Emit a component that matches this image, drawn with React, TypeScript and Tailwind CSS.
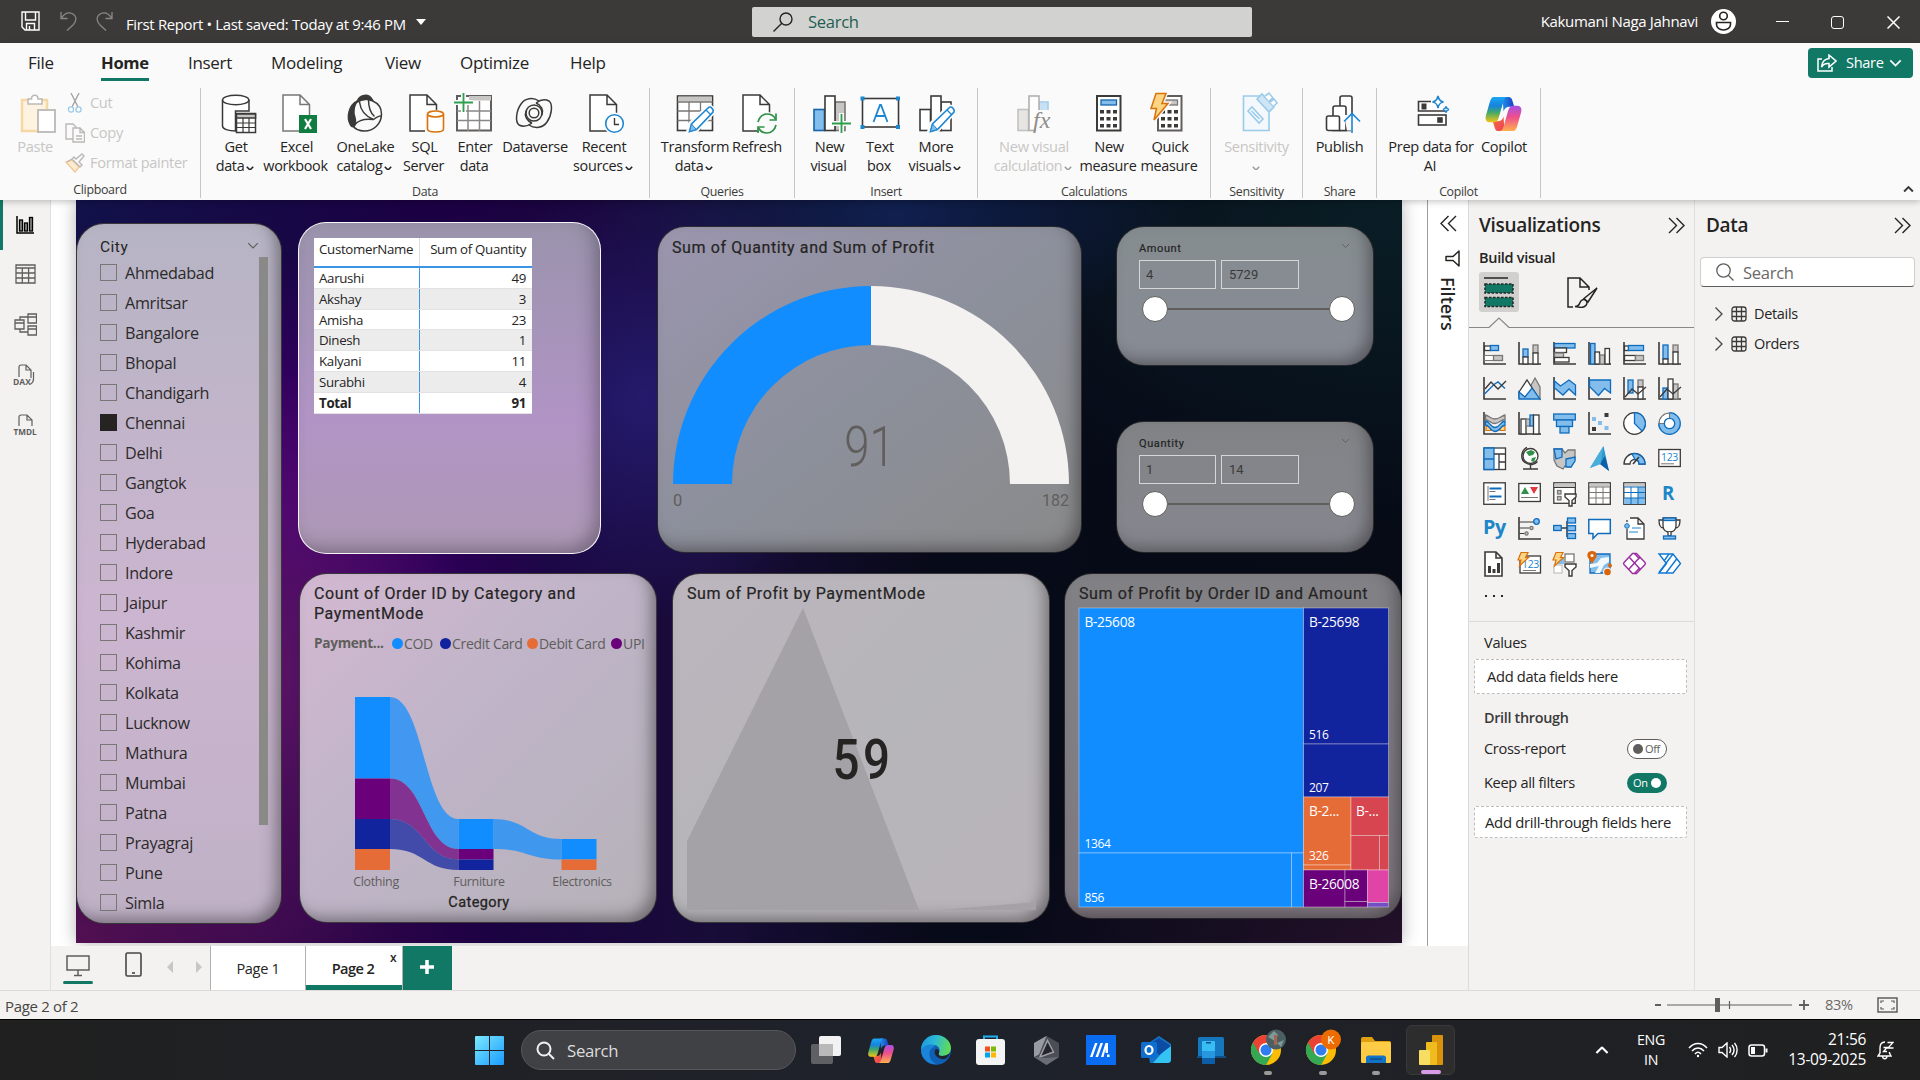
import React from "react";

const D = "#3b3a39";
const G = "#797775";
const LB = "#83bdeb";
const B = "#0f6cbd";
const GR = "#c8c6c4";

/* ---------- small shared drawings ---------- */

function Chevron({ className = "", w = 8, color = "currentColor", sw = 2 }: { className?: string; w?: number; color?: string; sw?: number }) {
  return (
    <svg className={className} width={w} height={w * 0.6} viewBox="0 0 10 6" fill="none" stroke={color} strokeWidth={sw}>
      <path d="M1 1l4 4 4-4" />
    </svg>
  );
}

function DoubleChevron({ flip = false }: { flip?: boolean }) {
  return (
    <svg width="17" height="17" viewBox="0 0 17 17" fill="none" stroke="#252423" strokeWidth="1.4" className={flip ? "rotate-180" : ""}>
      <path d="M1 1l7.5 7.5L1 16M8.500 1l7.500 7.500L8.500 16" />
    </svg>
  );
}

function Copilot({ size, id }: { size: number; id: string }) {
  return (
    <svg width={size} height={size} viewBox="0 0 40 40">
      <defs>
        <linearGradient id={id + "a"} x1="0" y1="0" x2="0" y2="1">
          <stop offset="0" stopColor="#1aa7f2" />
          <stop offset=".35" stopColor="#1583e0" />
          <stop offset=".6" stopColor="#3fa76c" />
          <stop offset="1" stopColor="#f2c514" />
        </linearGradient>
        <linearGradient id={id + "b"} x1="0" y1="0" x2="0" y2="1">
          <stop offset="0" stopColor="#a850e8" />
          <stop offset=".45" stopColor="#ee4f8b" />
          <stop offset="1" stopColor="#ffb04e" />
        </linearGradient>
        <linearGradient id={id + "c"} x1="0" y1="0" x2="1" y2="0">
          <stop offset="0" stopColor="#1f8de8" />
          <stop offset="1" stopColor="#1b3fc4" />
        </linearGradient>
        <linearGradient id={id + "d"} x1="0" y1="0" x2="1" y2="1">
          <stop offset="0" stopColor="#f0702c" />
          <stop offset="1" stopColor="#ef4060" />
        </linearGradient>
      </defs>
      <path d="M19 3h6c2.500 0 3.500 1.500 4 3.500l2 6.500h-5c-3 0-5 1.500-6 5z" fill={`url(#${id}c)`} />
      <path d="M21 38h-6c-2.500 0-3.500-1.500-4-3.500L9 28h5c3 0 5-1.500 6-5z" fill={`url(#${id}d)`} />
      <path d="M10 3h14c-2 0-3 1.500-4 4.500l-5 17c-1 3-2.500 4.500-5 4.500H6c-4 0-5-3-4-7L6 8c1-3 2-5 4-5z" fill={`url(#${id}a)`} />
      <path d="M30 38H16c2 0 3-1.500 4-4.500l5-17c1-3 2.500-4.500 5-4.500h4c4 0 5 3 4 7l-4 14c-1 3-2 5-4 5z" fill={`url(#${id}b)`} />
    </svg>
  );
}

const docPath = "M6 2h17l9.500 9.500V38H6zM23 2v9.500h9.500";

function Pencil() {
  return (
    <g>
      <path d="M13.500 39l2-8L33 14.500c2-1.500 6 1.500 5 4.500L21.500 36.500z" fill="#fff" stroke="#fafafa" strokeWidth="5" />
      <path d="M14.500 38.500l2-7.500L33.500 14.500c2-1.500 5.500 1.500 4.500 4.500L21.500 36.500z" fill="#fff" stroke="#1d86d1" strokeWidth="1.600" />
      <path d="M14.500 38.500l2-7.500 5 5.500z" fill={LB} stroke="#1d86d1" strokeWidth="1" />
      <path d="M31 17l5 5" stroke="#1d86d1" strokeWidth="1.300" />
    </g>
  );
}

function Bolt() {
  return <path d="M6 0.500h10l-4 10h6L4 27l2.500-11.500H1z" fill="#fbd584" stroke="#d9720b" strokeWidth="1.500" />;
}

function CalcKeys() {
  return (
    <g fill={D}>
      {[17, 24, 31].map((y) => [11, 17.5, 24].map((x) => <rect key={x + "-" + y} x={x} y={y} width="4" height="3.500" />))}
    </g>
  );
}

/* ---------- ribbon icons, 40 x 40 ---------- */

const ribbonIcons: Record<string, React.ReactNode> = {
  get: (
    <g stroke={D} strokeWidth="1.500" fill="#fff">
      <path d="M6.500 7v26c0 3 6 5 13 5V18h13.500V7" />
      <ellipse cx="19.700" cy="7" rx="13.200" ry="4.800" />
      <rect x="20.500" y="20.500" width="19" height="19" />
      <path d="M20.500 21h19v4h-19z" fill={GR} />
      <path d="M20.500 30h19M20.500 34.500h19M27 25v14.500M33 25v14.500" strokeWidth="1.200" />
    </g>
  ),
  excel: (
    <g>
      <path d={docPath} fill="#fff" stroke={G} strokeWidth="1.500" />
      <rect x="22" y="22" width="18" height="18" fill="#107c41" />
      <path d="M28 26l6 10M34 26l-6 10" stroke="#fff" strokeWidth="2.200" />
    </g>
  ),
  onelake: (
    <g fill="none" stroke={D} strokeWidth="1.500">
      <path d="M11.500 8C3 12 0 24 4.500 32c1.500 2.500 4 2 4.500 0 1.500-4 0-7-1-11C7.500 16 9 11 11.500 8z" fill={D} />
      <path d="M11 9c2-8 12-9 15.500-2C21 5.500 15 6.500 11 9z" fill={D} />
      <path d="M12 8.500C20 3.500 35.500 8 35.500 21c0 10-8 17-17 17C13 38 9 36 6.500 32.500" />
      <path d="M13.500 9c1 8 5 14 14 17.500M22.500 6.500c0 7 2.500 14 6 17M9 31.500c4-5 10-6 18.500-5 5-4 8-4 8-3" />
    </g>
  ),
  sql: (
    <g>
      <path d={docPath} fill="#fff" stroke={D} strokeWidth="1.500" transform="translate(-1 0)" />
      <rect x="20" y="17" width="20" height="23" fill="#fafafa" />
      <path d="M22.500 21v15c0 4 16 4 16 0V21" fill="#fff" stroke="#d9720b" strokeWidth="1.600" />
      <ellipse cx="30.500" cy="21" rx="8" ry="3" fill="#fff" stroke="#d9720b" strokeWidth="1.600" />
    </g>
  ),
  enter: (
    <g>
      <rect x="2" y="3" width="34" height="34.500" fill="#fff" stroke="#605e5c" strokeWidth="2" />
      <rect x="14" y="3" width="22" height="4.500" fill={GR} />
      <path d="M2 18h34M2 27.500h34M13 8v30M24.500 8v30" stroke="#8a8886" strokeWidth="1.500" />
      <path d="M8.500 0v19M-1 9.500h19" stroke="#fafafa" strokeWidth="5" />
      <path d="M8.500 0v19M-1 9.500h19" stroke="#2e9e4f" strokeWidth="1.800" />
    </g>
  ),
  dataverse: (
    <g fill="none" stroke={D} strokeWidth="1.500">
      <path d="M24 8C18 4 10 5 6 11c-5 7-6 18-2 21 4 2 9 1 13-2" />
      <path d="M14 32c6 4 14 3 18-3 5-7 6-18 2-21-4-2-9-1-13 2" />
      <circle cx="19" cy="20" r="8" />
      <circle cx="19" cy="20" r="4.800" />
      <path d="M21 10c5 2 8 7 6 12M17 30c-5-2-8-7-6-12" />
    </g>
  ),
  recent: (
    <g>
      <path d={docPath} fill="#fff" stroke={D} strokeWidth="1.500" />
      <circle cx="30.500" cy="30.500" r="11" fill="#fafafa" />
      <circle cx="30.500" cy="30.500" r="8.800" fill="#fff" stroke="#1d86d1" strokeWidth="1.600" />
      <path d="M30.500 25v6.500h4.500" stroke={D} strokeWidth="1.400" fill="none" />
    </g>
  ),
  transform: (
    <g>
      <rect x="2.500" y="3" width="35" height="34.500" fill="#fff" stroke={D} strokeWidth="1.600" />
      <rect x="3.300" y="3.500" width="33.500" height="5" fill={GR} />
      <path d="M2.500 9h35M2.500 18h35M2.500 27.500h35M14 9v28M25.500 9v28" stroke={G} strokeWidth="1.300" />
      <Pencil />
    </g>
  ),
  refresh: (
    <g>
      <path d={docPath} fill="#fff" stroke={D} strokeWidth="1.500" />
      <circle cx="30" cy="30.500" r="11.500" fill="#fafafa" />
      <g fill="none" stroke="#2e9247" strokeWidth="1.700">
        <path d="M21 29c1-5 5-8 9-8s7 2 8.500 5M39 32c-1 5-5 8-9 8s-7-2-8.500-5" />
        <path d="M39 20.500V27h-6.500M21 40v-6h6.500" />
      </g>
    </g>
  ),
  newvisual: (
    <g strokeWidth="1.600">
      <rect x="4" y="16.500" width="10.500" height="21" fill={LB} stroke="#1565ab" />
      <rect x="25" y="9" width="10" height="28.500" fill={GR} stroke={G} />
      <rect x="15" y="3" width="10" height="34.500" fill="#fff" stroke={D} />
      <path d="M31.500 20v21M22 30.500h19" stroke="#fafafa" strokeWidth="5" />
      <path d="M31.500 21v19M22 30.500h19" stroke="#2e9e4f" strokeWidth="1.800" />
    </g>
  ),
  textbox: (
    <g>
      <rect x="2.500" y="5.500" width="36" height="28.500" fill="#fff" stroke={D} strokeWidth="1.600" />
      <g fill="#1d86d1">
        <rect x="0.500" y="3.500" width="4" height="4" />
        <rect x="36" y="3.500" width="4" height="4" />
        <rect x="0.500" y="32" width="4" height="4" />
        <rect x="36" y="32" width="4" height="4" />
      </g>
      <path d="M13.500 29l6.500-17h1l6.500 17M15.500 23h10" fill="none" stroke="#1d86d1" strokeWidth="1.800" />
    </g>
  ),
  morevisuals: (
    <g>
      <g strokeWidth="1.600" fill="#fff" stroke={D}>
        <rect x="4" y="16.500" width="10.500" height="21" />
        <rect x="25" y="9" width="10" height="28.500" />
        <rect x="15" y="3" width="10" height="34.500" />
      </g>
      <Pencil />
    </g>
  ),
  nvc: (
    <g strokeWidth="1.600">
      <rect x="4" y="16.500" width="10.500" height="21" fill="#e6e5e4" stroke="#c4c2c0" />
      <rect x="25" y="9" width="9" height="20" fill="#c7e0f4" stroke="#a7cfec" />
      <rect x="15" y="3" width="10" height="34.500" fill="#fdfdfd" stroke="#b3b1af" />
      <rect x="22" y="17" width="18" height="23" fill="#fafafa" />
      <text x="19" y="35" fontFamily="Liberation Serif, serif" fontStyle="italic" fontSize="24" fill="#8f8d8b" letterSpacing="0">fx</text>
    </g>
  ),
  newmeasure: (
    <g>
      <rect x="8" y="3" width="23.500" height="34.500" fill="#fff" stroke={D} strokeWidth="2" />
      <rect x="12" y="7" width="15.500" height="5" fill={LB} stroke="#1565ab" strokeWidth="1.300" />
      <CalcKeys />
    </g>
  ),
  quick: (
    <g>
      <rect x="8" y="3" width="23.500" height="34.500" fill="#fff" stroke="#605e5c" strokeWidth="2" />
      <rect x="12" y="7" width="15.500" height="5" fill={GR} stroke={G} strokeWidth="1.300" />
      <CalcKeys />
      <path d="M6 0.500h10l-4 10h6L4 27l2.500-11.500H1z" fill="#fafafa" stroke="#fafafa" strokeWidth="4" />
      <Bolt />
    </g>
  ),
  sensitivity: (
    <g fill="none" stroke="#9ccbea" strokeWidth="1.600">
      <path d="M24 3H6.500v34.500H32V20" fill="#f2f8fc" />
      <path d="M11 18l4-4 11 12-4 4zM14.500 18l8 8" />
      <path d="M20 6l5-5 12 13-5 5z" fill="#cfe5f5" />
      <path d="M28 3l4-3 4 5-4 3M33 9l4-3 3 4-3 3" fill="#fff" />
    </g>
  ),
  publish: (
    <g fill="#fff" stroke={D} strokeWidth="1.600">
      <path d="M20 37.500V5a2 2 0 012-2h8a2 2 0 012 2v32.500z" />
      <path d="M13 37.500V15a2 2 0 012-2h9a2 2 0 012 2v22.500z" />
      <path d="M6.500 35.500V25a2 2 0 012-2h9a2 2 0 012 2v12.500H8.500a2 2 0 01-2-2z" />
      <path d="M24 22h16v18h-9v-2.500h-4z" fill="#fafafa" stroke="none" />
      <path d="M32 40V21M24 28.500l8-8 8 8" stroke="#1d86d1" fill="none" />
    </g>
  ),
  prep: (
    <g fill="#fff" stroke={D} strokeWidth="1.600">
      <path d="M20 8.500H7.500V18h27.500v-3" />
      <rect x="7.500" y="22" width="27.500" height="10" />
      <rect x="11" y="11" width="4" height="5" fill={D} strokeWidth="1" />
      <rect x="27" y="25" width="4" height="4" fill={D} />
      <path d="M27 3c.8 4 2 5.500 5.500 6-3.500.7-4.700 2-5.500 6-.8-4-2-5.300-5.500-6 3.500-.5 4.700-2 5.500-6z" stroke="#1d86d1" />
      <path d="M35 13.500c.5 2 1.200 2.700 3 3-1.800.4-2.500 1-3 3-.5-2-1.200-2.600-3-3 1.800-.3 2.500-1 3-3z" stroke="#1d86d1" />
    </g>
  ),
};

type Btn = { icon: string; l1: string; l2?: string; drop?: boolean; off?: boolean; w: string };

function RibbonButton({ icon, l1, l2, drop, off, w }: Btn) {
  return (
    <div className={`flex shrink-0 flex-col items-center ${w} ${off ? "text-[#c8c6c4]" : "text-[#252423]"}`}>
      <div className="h-10 w-10">
        {icon === "copilot" ? (
          <div className="pt-px">
            <Copilot size={39} id="rb" />
          </div>
        ) : (
          <svg width="40" height="40" viewBox="0 0 40 40" className="overflow-visible">
            {ribbonIcons[icon]}
          </svg>
        )}
      </div>
      <div className="mt-[3px] whitespace-nowrap text-[14.6px] leading-5">{l1}</div>
      <div className="flex h-5 items-center gap-[2px] whitespace-nowrap pr-[2px] text-[14.4px] leading-5">
        {l2 && <span>{l2}</span>}
        {drop && <Chevron className={off ? "mt-1 text-[#a19f9d]" : "mt-1"} w={8} />}
      </div>
    </div>
  );
}

function RibbonGroup({ label, w, pl, items }: { label: string; w: string; pl: string; items: Btn[] }) {
  return (
    <div className={`flex h-[110px] shrink-0 flex-col border-r border-[#c8c6c4] ${w}`}>
      <div className={`flex pt-[5px] ${pl}`}>
        {items.map((b) => (
          <RibbonButton key={b.icon} {...b} />
        ))}
      </div>
      <div className="mt-[7px] text-center text-[12.400px] leading-[17px] text-[#3b3a39]">{label}</div>
    </div>
  );
}

function TitleBar() {
  return (
    <header className="flex h-[43px] items-center bg-[#3b3a39] text-white">
      <div className="flex w-[752px] items-center">
        <svg className="ml-[21px]" width="19" height="20" viewBox="0 0 19 20" fill="none" stroke="#fff" strokeWidth="1.400">
          <path d="M1 1h17v18H4l-3-3zM4.500 1v8h10V1M5.500 19v-6.500h8V19M8.500 15v4" />
        </svg>
        <svg className="ml-5" width="17" height="20" viewBox="0 0 17 20" fill="none" stroke="#8a8886" strokeWidth="1.300">
          <path d="M1 1v6.500h6.500M1 7.500C4 3 8 1 12 2.500c5 2.500 5 7.500 1 11.500l-6 5.500" />
        </svg>
        <svg className="ml-[19px]" width="17" height="20" viewBox="0 0 17 20" fill="none" stroke="#8a8886" strokeWidth="1.300">
          <path d="M16 1v6.500H9.500M16 7.500C13 3 9 1 5 2.500c-5 2.500-5 7.500-1 11.500l6 5.500" />
        </svg>
        <span className="ml-[13px] mt-[5px] w-[282px] whitespace-nowrap text-[14.900px]">First Report&nbsp;•&nbsp;Last saved: Today at 9:46 PM</span>
        <svg className="ml-[8px] mt-[2px]" width="10" height="6" viewBox="0 0 10 6">
          <path d="M0 0h10L5 6z" fill="#fff" />
        </svg>
      </div>
      <div className="flex h-[30px] w-[500px] items-center rounded-[2px] bg-[#d2d2d0] pl-[21px]">
        <svg width="20" height="20" viewBox="0 0 20 20" fill="none" stroke="#252423" strokeWidth="1.400">
          <circle cx="13" cy="7" r="6" />
          <path d="M8.800 11.200L0.500 19.500" />
        </svg>
        <span className="ml-[15px] mt-px text-[16.600px] text-[#1e5e52]">Search</span>
      </div>
      <div className="flex flex-1 items-center justify-end pr-5">
        <span className="text-[15px]">Kakumani Naga Jahnavi</span>
        <svg className="ml-[13px]" width="25" height="25" viewBox="0 0 25 25">
          <circle cx="12.500" cy="12.500" r="12.500" fill="#fff" />
          <g fill="none" stroke="#252423" strokeWidth="1.600">
            <circle cx="12.500" cy="7" r="3.800" />
            <path d="M5.500 13.500h14v2c0 3-3 5.500-7 5.500s-7-2.500-7-5.500z" />
          </g>
        </svg>
        <span className="ml-10 h-[1.500px] w-[13px] bg-white" />
        <span className="ml-[42px] mr-px mt-[2px] h-[13px] w-[13px] rounded-[3px] border-[1.500px] border-white" />
        <svg className="ml-[42px] mt-[2px]" width="13" height="13" viewBox="0 0 13 13" stroke="#fff" strokeWidth="1.500">
          <path d="M0.500 0.500l12 12M12.500 0.500l-12 12" />
        </svg>
      </div>
    </header>
  );
}

function Ribbon() {
  return (
    <div className="relative z-10 h-[157px] bg-[#fafafa] shadow-[0_2px_6px_rgba(0,0,0,0.22)]">
      <div className="flex h-[45px] items-start justify-between">
        <nav className="flex pt-1 text-[17px] leading-[31px] text-[#252423]">
          <span className="w-[73px] pl-7">File</span>
          <span className="ml-7 w-[87px]">
            <span className="inline-block h-[34px] border-b-[3px] border-[#117865] text-[16.600px] font-bold">Home</span>
          </span>
          <span className="w-[83px]">Insert</span>
          <span className="w-[114px]">Modeling</span>
          <span className="w-[75px]">View</span>
          <span className="w-[110px]">Optimize</span>
          <span>Help</span>
        </nav>
        <button className="mr-[7px] mt-[5px] flex h-[30px] w-[105px] items-center rounded bg-[#117865] pl-[9px] text-[14.600px] text-white">
          <svg width="20" height="18" viewBox="0 0 20 18" fill="none" stroke="#fff" strokeWidth="1.500">
            <path d="M5 5H1v12h14v-4" />
            <path d="M12 1l7 6-7 6V9.500C8.500 9 6 10.500 4.500 13 5 8 8 5 12 4.500z" />
          </svg>
          <span className="ml-[9px]">Share</span>
          <Chevron className="ml-[5px]" w={13} sw={1.300} />
        </button>
      </div>
      <div className="flex">
        <div className="flex h-[110px] w-[201px] shrink-0 flex-col border-r border-[#c8c6c4] text-[#c8c6c4]">
          <div className="flex h-[88px] pt-[5px]">
            <div className="flex w-[53px] flex-col items-end whitespace-nowrap">
              <svg width="36" height="40" viewBox="0 0 36 40" className="-mr-[3px]">
                <rect x="2" y="7" width="25" height="31" fill="#fdf3e0" stroke="#f6d8a5" strokeWidth="2.500" />
                <path d="M8 6h3.500c0-5 6.500-5 6.500 0H22v5H8z" fill="#fff" stroke="#bbb9b7" strokeWidth="1.500" />
                <rect x="18" y="17" width="17" height="22" fill="#fff" stroke="#bbb9b7" strokeWidth="1.800" />
              </svg>
              <span className="mt-[3px] text-[14.600px] leading-5">Paste</span>
            </div>
            <div className="ml-3 flex flex-col text-[14.600px] leading-[30px]">
              <div className="flex h-[19px] items-center">
                <svg width="20" height="20" viewBox="0 0 20 20" fill="none" strokeWidth="1.300">
                  <path d="M6 0l7 14M14 0L7 14" stroke="#a19f9d" />
                  <circle cx="6" cy="16.500" r="2.600" stroke="#9ccbea" />
                  <circle cx="13.500" cy="16.500" r="2.600" stroke="#9ccbea" />
                </svg>
                <span className="mb-[2px] ml-[5px]">Cut</span>
              </div>
              <div className="mt-[11px] flex h-[19px] items-center">
                <svg width="20" height="20" viewBox="0 0 20 20" fill="#fafafa" stroke="#bbb9b7" strokeWidth="1.400">
                  <path d="M1 1h7l3 3v12H1z" />
                  <path d="M8 5h7l4.500 4.500V19H8zM15 5v4.500h4.500M11 13h6M11 16h6" />
                </svg>
                <span className="mb-[2px] ml-[5px]">Copy</span>
              </div>
              <div className="mt-[11px] flex h-[19px] items-center">
                <svg width="20" height="20" viewBox="0 0 20 20" fill="none" stroke="#bbb9b7" strokeWidth="1.400">
                  <path d="M1 9l6-2 7 7-4 5z" fill="#fdebd0" stroke="#f3c996" />
                  <path d="M7 6l8 8 2-2-3-3 5-6-2-2-6 5-2-2zM2 9l5-3" fill="#fafafa" />
                </svg>
                <span className="mb-[2px] ml-[5px] whitespace-nowrap">Format painter</span>
              </div>
            </div>
          </div>
          <div className="mt-[7px] text-center text-[12.400px] leading-[17px] text-[#3b3a39]">Clipboard</div>
        </div>
        <RibbonGroup
          label="Data"
          w="w-[449px]"
          pl="pl-[5px]"
          items={[
            { icon: "get", l1: "Get", l2: "data", drop: true, w: "w-[60px]" },
            { icon: "excel", l1: "Excel", l2: "workbook", w: "w-[61px]" },
            { icon: "onelake", l1: "OneLake", l2: "catalog", drop: true, w: "w-[77px]" },
            { icon: "sql", l1: "SQL", l2: "Server", w: "w-[41px]" },
            { icon: "enter", l1: "Enter", l2: "data", w: "w-[60px]" },
            { icon: "dataverse", l1: "Dataverse", w: "w-[60px]" },
            { icon: "recent", l1: "Recent", l2: "sources", drop: true, w: "w-[78px]" },
          ]}
        />
        <RibbonGroup
          label="Queries"
          w="w-[145px]"
          pl="pl-[10px]"
          items={[
            { icon: "transform", l1: "Transform", l2: "data", drop: true, w: "w-[70px]" },
            { icon: "refresh", l1: "Refresh", w: "w-[54px]" },
          ]}
        />
        <RibbonGroup
          label="Insert"
          w="w-[183px]"
          pl="pl-[9px]"
          items={[
            { icon: "newvisual", l1: "New", l2: "visual", w: "w-[51px]" },
            { icon: "textbox", l1: "Text", l2: "box", w: "w-[50px]" },
            { icon: "morevisuals", l1: "More", l2: "visuals", drop: true, w: "w-[62px]" },
          ]}
        />
        <RibbonGroup
          label="Calculations"
          w="w-[233px]"
          pl="pl-[10px]"
          items={[
            { icon: "nvc", l1: "New visual", l2: "calculation", drop: true, off: true, w: "w-[92px]" },
            { icon: "newmeasure", l1: "New", l2: "measure", w: "w-[58px]" },
            { icon: "quick", l1: "Quick", l2: "measure", w: "w-[64px]" },
          ]}
        />
        <RibbonGroup label="Sensitivity" w="w-[92px]" pl="pl-0" items={[{ icon: "sensitivity", l1: "Sensitivity", drop: true, off: true, w: "w-[91px]" }]} />
        <RibbonGroup label="Share" w="w-[74px]" pl="pl-0" items={[{ icon: "publish", l1: "Publish", w: "w-[73px]" }]} />
        <RibbonGroup
          label="Copilot"
          w="w-[164px]"
          pl="pl-[10px]"
          items={[
            { icon: "prep", l1: "Prep data for", l2: "AI", w: "w-[88px]" },
            { icon: "copilot", l1: "Copilot", w: "w-[58px]" },
          ]}
        />
        <div className="flex flex-1 items-end justify-end pr-[6px] pb-[5px]">
          <Chevron className="rotate-180" w={11} color={D} sw={1.800} />
        </div>
      </div>
    </div>
  );
}

function LeftRail() {
  return (
    <aside className="flex w-[51px] shrink-0 flex-col border-r border-[#e1dfdd] bg-[#f3f2f1]">
      <div className="flex h-[50px] items-center border-l-[3px] border-[#117865] pl-[13px]">
        <svg width="18" height="18" viewBox="0 0 18 18" fill="#8a8886" stroke="#000" strokeWidth="1.300">
          <path d="M1 0v17h17" fill="none" strokeWidth="1.500" />
          <rect x="3.500" y="4" width="3" height="11" />
          <rect x="8.500" y="7" width="3" height="8" />
          <rect x="13.500" y="1.500" width="3" height="13.500" />
        </svg>
      </div>
      <div className="flex h-[48px] items-center pl-[15px]">
        <svg width="21" height="20" viewBox="0 0 21 20" fill="none" stroke="#605e5c" strokeWidth="1.300">
          <path d="M1 1h19v18H1zM1 4h19M1 9h19M1 14h19M7.300 4v15M13.600 4v15" />
        </svg>
      </div>
      <div className="flex h-[52px] items-center pl-[14px]">
        <svg width="23" height="23" viewBox="0 0 23 23" fill="none" stroke="#605e5c" strokeWidth="1.300">
          <path d="M1 7h9v9H1zM1 10h9M14 1h8.500v9H14zM14 4h8.500M14 13h8.500v9H14zM14 16h8.500M6 7V4h8M6 16v3h8" />
        </svg>
      </div>
      <div className="flex h-[50px] items-center pl-[13px]">
        <svg width="23" height="22" viewBox="0 0 23 22" fill="none" stroke="#605e5c" strokeWidth="1.200" className="overflow-visible">
          <path d="M6 13V3a2 2 0 012-2h5l5 5v8M13 1v5h5M20.500 8v7c0 2-1 4-3 5" />
          <text x="0" y="20.500" fontSize="8.500" fontWeight="700" fontFamily="Open Sans" fill="#605e5c" stroke="none" letterSpacing="0">DAX</text>
        </svg>
      </div>
      <div className="flex h-[50px] items-center pl-[14px]">
        <svg width="23" height="22" viewBox="0 0 23 22" fill="none" stroke="#605e5c" strokeWidth="1.200" className="overflow-visible">
          <path d="M5 12V3a2 2 0 012-2h6l5 5v6M13 1v5h5" />
          <text x="-0.500" y="20.500" fontSize="8.200" fontWeight="700" fontFamily="Open Sans" fill="#605e5c" stroke="none" letterSpacing="0">TMDL</text>
        </svg>
      </div>
    </aside>
  );
}

/* ---------- report page ---------- */

const cardBase = "shrink-0 rounded-[28px] border border-black/70";
const inner = "shadow-[inset_-8px_-8px_16px_-4px_rgba(40,35,40,0.5)]";

const cities = ["Ahmedabad", "Amritsar", "Bangalore", "Bhopal", "Chandigarh", "Chennai", "Delhi", "Gangtok", "Goa", "Hyderabad", "Indore", "Jaipur", "Kashmir", "Kohima", "Kolkata", "Lucknow", "Mathura", "Mumbai", "Patna", "Prayagraj", "Pune", "Simla"];

function CityCard() {
  return (
    <section className={`mt-[23px] flex h-[701px] w-[206px] ${cardBase} ${inner} bg-linear-to-b from-[#b6b4c4] via-[#ccb5d0] via-55% to-[#bfb1c6]`}>
      <div className="flex-1 pl-[23px] pt-[14px]">
        <div className="font-[Roboto] text-[15.500px] leading-[18px] tracking-[0.500px] text-[#252423]">City</div>
        <ul className="mt-[2px] text-[16.200px] leading-[30px] text-[#2c2a29]">
          {cities.map((c) => (
            <li key={c} className="flex h-[30px] items-center">
              <span className={`mb-px h-[17px] w-[17px] border ${c === "Chennai" ? "border-[#252423] bg-[#252423]" : "border-[#797775]"}`} />
              <span className="ml-2">{c}</span>
            </li>
          ))}
        </ul>
      </div>
      <div className="flex w-[38px] flex-col pt-[18px]">
        <Chevron className="ml-1" w={12} color="#605e5c" sw={1} />
        <div className="ml-4 mt-[8px] h-[568px] w-[9px] bg-[#898987]" />
      </div>
    </section>
  );
}

const rows: [string, number][] = [["Aarushi", 49], ["Akshay", 3], ["Amisha", 23], ["Dinesh", 1], ["Kalyani", 11], ["Surabhi", 4]];

function TableRow({ name, value, tone }: { name: string; value: number; tone: string }) {
  return (
    <div className={`flex h-[20.800px] items-center border-b border-[#e3e1e6] ${tone}`}>
      <div className="flex h-full w-[106px] items-center border-r border-[#3a96e4] pl-[5px]">{name}</div>
      <div className="flex-1 pr-[6px] text-right">{value}</div>
    </div>
  );
}

function TableCard() {
  return (
    <section className="ml-4 mt-[22px] h-[332px] w-[303px] shrink-0 rounded-[28px] border-[1.500px] border-white/90 bg-linear-to-b from-[#9a93ac] via-[#b194c5] via-60% to-[#ad98b4] pl-[15px] pt-[15px] shadow-[inset_-8px_-8px_18px_-4px_rgba(50,45,60,0.45)]">
      <div className="w-[218px] bg-white text-[13.300px] leading-[20px] text-[#252423]">
        <div className="flex h-[30px] whitespace-nowrap border-b-2 border-[#3a96e4]">
          <div className="w-[106px] border-r border-[#e1dfdd] pl-[5px] pt-px">CustomerName</div>
          <div className="flex-1 pr-[6px] pt-px text-right">Sum of Quantity</div>
        </div>
        {rows.map(([n, q], i) => (
          <TableRow key={n} name={n} value={q} tone={i % 2 ? "bg-[#ececec]" : "bg-white"} />
        ))}
        <TableRow name="Total" value={91} tone="bg-white font-bold" />
      </div>
    </section>
  );
}

const vTitle = "font-[Roboto] text-[16px] leading-5 tracking-[0.600px] text-[#252423] whitespace-nowrap [-webkit-text-stroke:0.200px_#252423]";

function GaugeCard() {
  return (
    <section className={`ml-[56px] mt-[26px] h-[327px] w-[425px] ${cardBase} ${inner} bg-linear-to-br from-[#9b95ae] via-[#8c909b] to-[#8a8a8a] pl-[14px] pt-[11px]`}>
      <h2 className={vTitle}>Sum of Quantity and Sum of Profit</h2>
      <svg width="398" height="250" viewBox="672 258 398 250" className="overflow-visible">
        <path d="M673 484A198 198 0 01871 286V345A139 139 0 00732 484Z" fill="#118dff" />
        <path d="M871 286A198 198 0 011069 484H1010A139 139 0 00871 345Z" fill="#f3f2f1" />
        <g fontFamily="Roboto" fill="#605e5c" letterSpacing="0">
          <text x="0" y="0" transform="translate(869.500 466) scale(.83 1)" fontSize="55" fontWeight="300" textAnchor="middle">91</text>
          <text x="673" y="506" fontSize="16.500">0</text>
          <text x="1069" y="506" fontSize="16" textAnchor="end">182</text>
        </g>
      </svg>
    </section>
  );
}

function Slicer({ label, from, to, cls }: { label: string; from: string; to: string; cls: string }) {
  return (
    <section className={`${cardBase} ${inner} w-[258px] ${cls}`}>
      <div className="flex items-start justify-between pl-[22px] pr-[23px] pt-[14px]">
        <h3 className="font-[Roboto] text-[11px] leading-[15px] tracking-[0.600px] text-[#252423] [-webkit-text-stroke:0.200px_#252423]">{label}</h3>
        <Chevron className="mt-[2px]" w={9} color="#605e5c" sw={1} />
      </div>
      <div className="flex gap-[5px] pl-[22px] pt-[4px] font-[Roboto] text-[13px] leading-[27px] tracking-normal text-[#3b3a39]">
        <div className="h-[29px] w-[77px] border border-[#d6d6d6] pl-[6px]">{from}</div>
        <div className="h-[29px] w-[78px] border border-[#d6d6d6] pl-[7px]">{to}</div>
      </div>
      <div className="ml-[25px] mt-[7px] flex w-[213px] items-center">
        <span className="h-[26px] w-[26px] rounded-full border border-[#605e5c] bg-white" />
        <span className="h-[2px] flex-1 bg-[#605e5c]" />
        <span className="h-[26px] w-[26px] rounded-full border border-[#605e5c] bg-white" />
      </div>
    </section>
  );
}

function RibbonChartCard() {
  const seg = (x: number, y: number, h: number, c: string) => <rect key={x + "-" + y} x={x} y={y} width="35" height={h} fill={c} />;
  const band = (x1: number, x2: number, a: number, b: number, c: number, d: number, fill: string) => {
    const m = (x1 + x2) / 2;
    return <path d={`M${x1} ${a}C${m} ${a} ${m} ${c} ${x2} ${c}V${d}C${m} ${d} ${m} ${b} ${x1} ${b}Z`} fill={fill} fillOpacity=".72" />;
  };
  return (
    <section className={`ml-[17px] h-[350px] w-[358px] ${cardBase} ${inner} bg-linear-to-br from-[#d3b8d2] via-[#bfb4c8] via-45% to-[#b6b2b8] pl-[14px] pt-[10px]`}>
      <h2 className={vTitle}>
        Count of Order ID by Category and
        <br />
        PaymentMode
      </h2>
      <div className="mt-[8px] flex h-[22px] items-center whitespace-nowrap text-[14px] text-[#605e5c]">
        <span className="w-[78px] text-[13.700px] font-bold">Payment...</span>
        {[
          ["COD", "#118dff", "w-[48px]"],
          ["Credit Card", "#12239e", "w-[87px]"],
          ["Debit Card", "#e66c37", "w-[84px]"],
          ["UPI", "#6b007b", "w-[30px]"],
        ].map(([n, c, w]) => (
          <span key={n} className={`flex shrink-0 items-center ${w}`}>
            <svg width="11" height="11" viewBox="0 0 11 11" className="mr-px shrink-0">
              <circle cx="5.500" cy="5.500" r="5.500" fill={c} />
            </svg>
            {n}
          </span>
        ))}
      </div>
      <svg width="330" height="250" viewBox="314 654 330 250" className="overflow-visible">
        {band(390, 458.5, 697, 778.5, 819, 849, "#118dff")}
        {band(390, 458.5, 778.5, 819, 849, 859.5, "#6b007b")}
        {band(390, 458.5, 819, 849, 859.5, 870, "#12239e")}
        {band(493.5, 561.5, 819, 849, 839, 859.5, "#118dff")}
        {seg(355, 697, 81.5, "#118dff")}
        {seg(355, 778.5, 40.5, "#6b007b")}
        {seg(355, 819, 30, "#12239e")}
        {seg(355, 849, 21, "#e66c37")}
        {seg(458.5, 819, 30, "#118dff")}
        {seg(458.5, 849, 10.5, "#6b007b")}
        {seg(458.5, 859.5, 10.5, "#12239e")}
        {seg(561.5, 839, 20.5, "#118dff")}
        {seg(561.5, 859.5, 10.5, "#e66c37")}
        <g fontFamily="Open Sans" fontSize="12.500" fill="#605e5c" textAnchor="middle">
          <text x="376" y="886">Clothing</text>
          <text x="479" y="886">Furniture</text>
          <text x="582" y="886">Electronics</text>
        </g>
        <text x="479" y="907" fontFamily="Roboto" fontSize="14.500" fill="#252423" stroke="#252423" strokeWidth=".3" textAnchor="middle" letterSpacing=".4">
          Category
        </text>
      </svg>
    </section>
  );
}

function KpiCard() {
  return (
    <section className={`ml-[15px] h-[350px] w-[378px] ${cardBase} ${inner} bg-linear-to-br from-[#bcb5be] via-[#b6b5b9] to-[#b9b4bb] pl-[14px] pt-[10px]`}>
      <h2 className={vTitle}>Sum of Profit by PaymentMode</h2>
      <svg width="350" height="310" viewBox="687 604 350 310" className="overflow-visible">
        <path d="M687 841L803 608L919 910H687Z" fill="#a4a2a6" />
        <path d="M940 910L1036 902V910Z" fill="#a4a2a6" />
        <text transform="translate(863 779) scale(.85 1)" fontFamily="Roboto" fontSize="56" fontWeight="500" fill="#252423" textAnchor="middle" letterSpacing="4">
          59
        </text>
      </svg>
    </section>
  );
}

function TreemapCard() {
  const cells: [number, number, number, number, string][] = [
    [1079, 608, 224.5, 245, "#118dff"],
    [1079, 853, 212.5, 54, "#118dff"],
    [1291.5, 853, 12, 54, "#118dff"],
    [1303.5, 608, 85, 136, "#12239e"],
    [1303.5, 744, 85, 53, "#12239e"],
    [1303.5, 797, 47.5, 68, "#e66c37"],
    [1303.5, 865, 47.5, 5, "#e66c37"],
    [1351, 797, 37.5, 38.5, "#d64550"],
    [1351, 835.5, 28.5, 34.5, "#d64550"],
    [1379.5, 835.5, 9, 34.5, "#d64550"],
    [1303.5, 870, 41.5, 37, "#6b007b"],
    [1345, 870, 22.5, 31.5, "#6b007b"],
    [1345, 901.5, 22.5, 5.5, "#6b007b"],
    [1367.5, 870, 21, 32.5, "#e044a7"],
    [1367.5, 902.5, 21, 4.5, "#744ec2"],
  ];
  const labels: [number, number, string][] = [
    [1084.5, 627, "B-25608"],
    [1309, 627, "B-25698"],
    [1309, 816, "B-2..."],
    [1356, 816, "B-..."],
    [1309, 889, "B-26008"],
  ];
  const values: [number, number, string][] = [
    [1084.5, 848, "1364"],
    [1084.5, 902, "856"],
    [1309, 739, "516"],
    [1309, 792, "207"],
    [1309, 860, "326"],
  ];
  return (
    <section className={`ml-[14px] h-[346px] w-[338px] ${cardBase} ${inner} bg-linear-to-b from-[#818185] via-[#807e84] to-[#7f777f] pl-[14px] pt-[10px]`}>
      <h2 className={vTitle}>Sum of Profit by Order ID and Amount</h2>
      <svg width="310" height="304" viewBox="1079 604 310 304" className="overflow-visible">
        {cells.map(([x, y, w, h, c]) => (
          <rect key={x + "-" + y} x={x} y={y} width={w} height={h} fill={c} stroke="#fff" strokeOpacity=".35" strokeWidth="1" />
        ))}
        <g fontFamily="Open Sans" fill="#fff">
          {labels.map(([x, y, t]) => (
            <text key={x + "-" + y} x={x} y={y} fontSize="13.700">{t}</text>
          ))}
          {values.map(([x, y, t]) => (
            <text key={x + "-" + y} x={x} y={y} fontSize="12">{t}</text>
          ))}
        </g>
      </svg>
    </section>
  );
}

const pageBg =
  "bg-[radial-gradient(ellipse_210px_310px_at_14%_64%,#5c1464_0%,transparent_100%),radial-gradient(ellipse_300px_260px_at_14%_42%,#48007a_0%,transparent_100%),radial-gradient(ellipse_220px_220px_at_43%_27%,#241a6c_0%,transparent_100%),radial-gradient(ellipse_300px_120px_at_62%_2%,#10204f_0%,transparent_100%),radial-gradient(ellipse_420px_330px_at_0%_100%,#521052_0%,transparent_100%),radial-gradient(ellipse_360px_260px_at_0%_0%,#12124a_0%,transparent_100%),radial-gradient(ellipse_500px_330px_at_100%_0%,#0a1e26_0%,transparent_100%),radial-gradient(ellipse_400px_200px_at_100%_100%,#24102a_0%,transparent_100%),linear-gradient(90deg,#1a0040_0%,#1c0044_28%,#180c38_48%,#070a18_65%,#060b16_100%)]";

function ReportPage() {
  return (
    <div className={`ml-[25px] flex h-[743px] w-[1326px] overflow-hidden ${pageBg} shadow-[0_0_16px_rgba(0,0,0,0.3)]`}>
      <CityCard />
      <div className="flex w-[1120px] flex-col">
        <div className="flex h-[373px]">
          <TableCard />
          <GaugeCard />
          <div className="ml-[34px] flex flex-col pt-[26px]">
            <Slicer label="Amount" from="4" to="5729" cls="h-[140px] bg-linear-to-b from-[#858c8f] to-[#888c96]" />
            <Slicer label="Quantity" from="1" to="14" cls="mt-[55px] h-[132px] bg-linear-to-b from-[#808386] to-[#86878f]" />
          </div>
        </div>
        <div className="flex">
          <RibbonChartCard />
          <KpiCard />
          <TreemapCard />
        </div>
      </div>
    </div>
  );
}

function PageTabs() {
  return (
    <div className="flex h-11 bg-[#f3f2f1] text-[14.600px] text-[#252423]">
      <div className="flex w-[159px] items-start">
        <div className="ml-[12px] flex w-[30px] flex-col items-center pt-[9px]">
          <svg width="24" height="22" viewBox="0 0 24 22" fill="none" stroke="#605e5c" strokeWidth="1.500">
            <path d="M1 1h22v14H1zM8 20.500h8M12 15v5.500" />
          </svg>
          <span className="mt-[4px] h-[3px] w-[30px] rounded-full bg-[#117865]" />
        </div>
        <svg className="ml-[32px] mt-[6px]" width="17" height="25" viewBox="0 0 17 25" fill="none" stroke="#484644" strokeWidth="1.600">
          <rect x="1" y="1" width="15" height="23" rx="1.500" />
          <path d="M7 21h3" />
        </svg>
        <svg className="ml-[25px] mt-[15px]" width="35" height="12" viewBox="0 0 35 12" fill="#c8c6c4">
          <path d="M6 0v12L0 6zM29 0v12l6-6z" />
        </svg>
      </div>
      <div className="flex w-[96px] items-center justify-center border-x border-[#b3b0ad] bg-white pt-[2px]">Page 1</div>
      <div className="relative flex w-[96px] items-center justify-center border-b-[5px] border-[#117865] bg-white pr-[2px] pt-[7px] font-semibold tracking-[-0.040em]">
        Page 2<span className="absolute right-[6px] top-[1px] text-[12px] leading-[22px]">x</span>
      </div>
      <div className="flex w-[50px] items-center justify-center border-l border-[#b3b0ad] bg-[#117865] pb-[2px] pr-px">
        <svg width="14" height="14" viewBox="0 0 14 14">
          <path d="M7 0v14M0 7h14" stroke="#fff" strokeWidth="3.500" />
        </svg>
      </div>
    </div>
  );
}

/* ---------- visualization gallery icons, 23 x 23 ---------- */

const axes = <path d="M1 0v22h22" fill="none" stroke={D} strokeWidth="1.600" />;
const blue = { fill: LB, stroke: B, strokeWidth: 1.3 };
const gray = { fill: GR, stroke: G, strokeWidth: 1.3 };
const white = { fill: "#fff", stroke: D, strokeWidth: 1.3 };
const miniBolt = <path d="M3 0.500h7l-2.500 5h3L1.500 14 3 8H0z" fill="#fbd584" stroke="#d9720b" strokeWidth="1.200" />;
const funnelBit = <path d="M12 12h11v3l-4 3.500V24h-3v-5.500L12 15z" fill="#fff" stroke={D} strokeWidth="1.400" />;

const vizIcons: React.ReactNode[] = [
  <g>{axes}<rect x="1.500" y="4" width="6" height="4.500" {...white} /><rect x="7.500" y="3.500" width="8" height="5" {...blue} /><rect x="1.500" y="13.500" width="9" height="5" fill="#fff" stroke={G} /><rect x="10.500" y="13.500" width="9" height="5" {...gray} /></g>,
  <g>{axes}<rect x="5" y="7" width="5" height="8" {...blue} /><rect x="5" y="15" width="5" height="7" {...white} /><rect x="15" y="3" width="5" height="8" {...gray} /><rect x="15" y="11" width="5" height="11" {...white} /></g>,
  <g>{axes}<rect x="1.500" y="1.500" width="20.500" height="4.500" {...blue} /><rect x="1.500" y="6" width="12" height="4.500" {...white} /><rect x="1.500" y="11" width="9" height="4.500" {...gray} /><rect x="1.500" y="15.500" width="14.500" height="4.500" {...white} /></g>,
  <g>{axes}<rect x="2.500" y="1.500" width="4.500" height="20.500" {...blue} /><rect x="7" y="10" width="4.500" height="12" {...white} /><rect x="12" y="13" width="4.500" height="9" {...gray} /><rect x="17" y="6.500" width="4.500" height="15.500" {...white} /></g>,
  <g>{axes}<rect x="1.500" y="4" width="4" height="4.500" {...white} /><rect x="5.500" y="3.500" width="15" height="5" {...blue} /><rect x="1.500" y="13.500" width="11" height="5" {...white} /><rect x="12.500" y="13.500" width="8" height="5" {...gray} /></g>,
  <g>{axes}<rect x="5" y="3" width="5" height="14" {...blue} /><rect x="5" y="17" width="5" height="5" {...white} /><rect x="15" y="3" width="5" height="7" {...gray} /><rect x="15" y="10" width="5" height="12" {...white} /></g>,
  <g fill="none" strokeWidth="1.400">{axes}<path d="M1.500 17L11 7.500l4-2.500 7 6.500" stroke={B} /><path d="M2 12l6-7 7 7 8-8" stroke={D} /></g>,
  <g strokeWidth="1.300"><path d="M11 12L17 1l5 9v12z" fill={GR} stroke={G} /><path d="M1 15L9 3l9 14-17 4z" fill="#fff" stroke={D} /><path d="M1 15l6 5 7-9 8 11H1z" fill={LB} stroke={B} /></g>,
  <g strokeWidth="1.300">{axes}<path d="M1.500 4l6 5L16 3l6.500 5v10L16 12l-6 6-8.500-7z" fill={LB} stroke={B} /></g>,
  <g strokeWidth="1.300">{axes}<path d="M1.500 3h21v13l-6-4.500-6 7-9-9z" fill={LB} stroke={B} /></g>,
  <g>{axes}<rect x="5" y="3" width="5" height="13" {...blue} /><rect x="15" y="3" width="5" height="7" {...gray} /><rect x="15" y="10" width="5" height="12" {...white} /><path d="M2 20l7-8 6 5 8-7" fill="none" stroke={D} strokeWidth="1.300" /></g>,
  <g>{axes}<rect x="5" y="11" width="5" height="11" {...blue} /><rect x="15" y="7" width="5" height="15" {...gray} /><rect x="10" y="2" width="5" height="20" {...white} /><path d="M2 20l7-8 6 5 8-7" fill="none" stroke={D} strokeWidth="1.300" /></g>,
  <g>{axes}<path d="M3 14h5v4.500H3zM17 14h5v4.500h-5z" fill="#fbd584" stroke="#d9720b" strokeWidth="1.200" /><path d="M2.500 3c4 1 5 4 9.500 4s6-3 10-4v4.500c-4 0-6 4-10 4S6 8 2.500 7.500z" {...gray} /><path d="M2.500 9c4 0 5 6.500 9.500 6.500S18 9 22 9v4c-4 0-5 6.500-10 6.500S6.500 13 2.500 13z" {...blue} /></g>,
  <g>{axes}<rect x="3" y="7" width="5" height="15" {...white} /><rect x="8" y="7" width="4" height="7" {...gray} /><rect x="12" y="3" width="3.500" height="11" {...blue} /><rect x="15.500" y="3" width="5.500" height="19" {...white} /></g>,
  <g {...blue}><rect x="0.700" y="2" width="21.600" height="6" /><rect x="3.500" y="8" width="16" height="6.500" /><rect x="7" y="14.500" width="9" height="6.500" /></g>,
  <g>{axes}<rect x="4" y="5" width="4" height="4" fill={LB} /><rect x="10" y="9" width="4" height="4" fill={LB} /><rect x="16.500" y="14" width="4" height="4" fill={LB} /><rect x="16.500" y="1" width="4" height="4" fill={D} /><rect x="4" y="15" width="4" height="4" fill={D} /></g>,
  <g><circle cx="11.500" cy="11.500" r="10.800" {...white} /><path d="M11.500 0.700a10.800 10.800 0 017.600 18.400l-7.600-7.600z" {...blue} /></g>,
  <g><circle cx="11.500" cy="11.500" r="8" fill="none" stroke={LB} strokeWidth="5.500" /><path d="M11.500 1A10.500 10.500 0 001 11.500h5.500a5 5 0 015-5z" fill="#fff" stroke={G} strokeWidth="1.200" /><circle cx="11.500" cy="11.500" r="5.200" fill="#fff" stroke={B} strokeWidth="1.300" /><path d="M11.500 0.700A10.800 10.800 0 11.700 11.500" fill="none" stroke={B} strokeWidth="1.300" /></g>,
  <g><rect x="1" y="1" width="21.500" height="21.500" {...white} /><path d="M1 1h10v21.500H1zM1 12h10" {...blue} /><path d="M11 7h11M16 7v15M16 15h6" fill="none" stroke={D} strokeWidth="1.300" /></g>,
  <g><circle cx="12.500" cy="9" r="7.500" fill="#fff" stroke={D} strokeWidth="1.300" /><path d="M8 5l5-2 4 2-2 3-4 1zM14 11l4-1-2 5-3-1z" fill="#2e9247" /><path d="M9 0.500C3 3 2 12 7 15.500s10 2 12.500-1M12.500 17v4.500M5 22h15" fill="none" stroke={D} strokeWidth="1.400" /></g>,
  <g><path d="M1 2h8l3 4 3-3h7v9l-4 8-6-1-2 3-6-3-3-6z" {...gray} /><path d="M1 2h8v8l-6 2zM13 12l9-2v4l-4 6h-5z" {...blue} /></g>,
  <g><path d="M15.500-1L2 21l10-4 9 7z" fill="#2f96cf" /><path d="M12 17l9 7L17 9z" fill="#0f5ea8" /><path d="M15.500-1l-3 18L2 21z" fill="#48aedb" /></g>,
  <g><path d="M1 17a10.500 10.500 0 0121 0h-6a4.500 4.500 0 00-9 0z" {...white} /><path d="M9 7a10.500 10.500 0 0113 10h-6a4.500 4.500 0 00-4-4.500z" {...blue} /><path d="M10 17l6-7" stroke={D} strokeWidth="1.600" /></g>,
  <g><rect x="0.800" y="2.500" width="21.500" height="17" {...white} /><text x="3" y="14" fontSize="10.500" fontFamily="Open Sans" fill="#1d86d1">123</text><path d="M3 16.800h13" stroke={G} /></g>,
  <g><rect x="0.800" y="0.800" width="21.500" height="21.500" {...white} /><path d="M5 4v15" stroke={G} /><path d="M6.500 6.500h12M6.500 14.500h12" stroke={B} strokeWidth="2" /><path d="M6.500 9.500h6M6.500 17.500h6" stroke={G} /></g>,
  <g><rect x="0.800" y="1.500" width="21.500" height="18" {...white} /><path d="M3 12l4-7 4 7z" fill="#2e9247" /><path d="M12 5h8l-4 7z" fill="#e0393e" /><path d="M3 15.500h17" stroke={G} /></g>,
  <g><rect x="0.800" y="0.800" width="21.500" height="20.500" {...white} /><rect x="1.500" y="1.500" width="20" height="3.500" fill={GR} /><path d="M1 5.500h21" stroke={D} /><rect x="4.500" y="8.500" width="3.500" height="3.500" {...gray} /><rect x="4.500" y="14.500" width="3.500" height="3.500" {...gray} />{funnelBit}</g>,
  <g><rect x="0.800" y="0.800" width="21.500" height="21.500" {...white} /><rect x="1.500" y="1.500" width="20" height="3" fill={GR} /><path d="M1 5h21M1 10.500h21M1 16h21M8 5v17M15 5v17" stroke={G} /></g>,
  <g><rect x="0.800" y="0.800" width="21.500" height="21.500" {...white} /><rect x="1.500" y="1.500" width="20" height="3" fill={GR} /><path d="M15 5h7v17H1v-6h14z" fill={LB} /><path d="M1 5h21M1 10.500h21M1 16h21M8 5v17M15 5v17" stroke={B} /></g>,
  <g><text x="4" y="18" fontSize="20" fontWeight="700" fontFamily="Open Sans" fill="#1d86c9" textLength="12" lengthAdjust="spacingAndGlyphs">R</text></g>,
  <g><text x="0" y="17" fontSize="20" fontWeight="700" fontFamily="Open Sans" fill="#1d86c9" textLength="23" lengthAdjust="spacingAndGlyphs">Py</text></g>,
  <g>{axes}<path d="M1.500 5h15M1.500 11h10M1.500 16.500h5" stroke={D} strokeWidth="1.200" /><circle cx="18.500" cy="4.500" r="2.800" {...blue} /><circle cx="13.500" cy="11" r="1.600" {...gray} /><circle cx="8.500" cy="16.500" r="1.600" {...gray} /></g>,
  <g><path d="M8 11h6M14 11V4M14 11v9M14 3h3M14 19.500h3M14 11h3" stroke={D} strokeWidth="1.500" fill="none" /><rect x="0.700" y="8.500" width="7.500" height="5" {...blue} /><rect x="14.500" y="1" width="8" height="5" {...blue} /><rect x="14.500" y="8.700" width="8" height="5" {...blue} /><rect x="14.500" y="16.500" width="8" height="5" {...blue} /></g>,
  <g><path d="M0.800 2.500h21.500v14H10l-5 5v-5H0.800z" fill="#fff" stroke={B} strokeWidth="1.500" /></g>,
  <g><path d="M7 1h8l6 6v15H4V12M4 5V3M15 1v6h6" {...white} /><circle cx="4" cy="9" r="2.300" fill={LB} stroke={B} /><path d="M9 11h9M6 15h9" stroke="#1d86d1" /></g>,
  <g><path d="M5 1h13v8c0 4-3 6-6.500 6S5 13 5 9zM5 3H1c0 6 2 8 4.500 8M18 3h4c0 6-2 8-4.500 8" {...white} /><path d="M10 15v4h3v-4" {...white} /><rect x="5.500" y="19" width="12" height="3" {...blue} /><rect x="5.500" y="1" width="12" height="2.500" {...blue} /></g>,
  <g transform="translate(1 0)"><path d="M1 0h11l6 6v18H1zM12 0v6h6" {...white} strokeWidth="1.600" /><path d="M4 14h3v7H4zM8.500 17h3v4h-3zM13 11h3v10h-3z" fill={D} /></g>,
  <g><rect x="2" y="4" width="20.500" height="17" {...white} /><text x="4" y="16" fontSize="10.500" fontFamily="Open Sans" fill="#1d86d1">123</text><path d="M5 18.500h13" stroke={G} />{miniBolt}</g>,
  <g><rect x="12" y="2" width="9" height="8" fill="#fff" stroke={G} strokeWidth="1.300" /><rect x="1" y="13" width="8" height="8" fill="#fff" stroke={GR} strokeWidth="1.300" /><rect x="5" y="6" width="6" height="6" fill={LB} />{miniBolt}{funnelBit}</g>,
  <g><path d="M2 2h20v19H2z" {...blue} /><path d="M2 12l7-1 4-5 8-1v5l-5 3-4 8H7l4-7-9 2z" fill="#f3f8fc" /><path d="M4-1c5 0 6 5 3 8l-3 5-3-5c-3-3-2-8 3-8z" fill="#d9640b" /><circle cx="4" cy="3.500" r="1.500" fill="#fff" /><circle cx="19.500" cy="20" r="4.500" fill="#f3f2f1" /><circle cx="19.500" cy="20" r="3.300" fill="#d9640b" /><circle cx="22" cy="13.500" r="2" fill="#d9640b" /></g>,
  <g fill="#fff" stroke="#9a2ca0" strokeWidth="1.400"><path d="M9.500 1.500L1 10.500a1.500 1.500 0 000 2l8.500 9h4l8.500-9a1.500 1.500 0 000-2l-8.500-9z" /><path d="M6.500 5.500l11 12M17 5l-11 12M11.500 1.500l5 5.500M11.500 21.500l5-5.500" fill="none" /></g>,
  <g fill="#fff" stroke="#1078d4" strokeWidth="1.400"><path d="M1 2h14l7.500 9.500L15 21H1l7.500-9.500z" /><path d="M15 2L1 20.500M19 6.500L8 21M6 9l5-7" fill="none" /></g>,
];

function VizPane() {
  return (
    <aside className="flex w-[226px] shrink-0 flex-col border-r border-[#e1dfdd] bg-[#f3f2f1] text-[#252423]">
      <div className="flex h-[50px] items-center justify-between pl-[10px] pr-[9px]">
        <h2 className="text-[19px] font-semibold">Visualizations</h2>
        <DoubleChevron />
      </div>
      <div className="pl-[10px] text-[14.500px] font-semibold leading-[15px]">Build visual</div>
      <div className="mt-[7px] flex h-[40px] gap-12 pl-[10px]">
        <div className="flex h-10 w-10 items-center justify-center rounded-[3px] bg-[#d2d0ce]">
          <svg width="30" height="31" viewBox="0 0 30 31">
            <path d="M0 1h24" stroke="#252423" strokeWidth="1.500" />
            <g fill="#117865" stroke="#252423" strokeWidth="1.500" strokeDasharray="2.500 1.500">
              <rect x="1" y="7" width="28" height="9" />
              <rect x="1" y="20.500" width="28" height="9" />
            </g>
          </svg>
        </div>
        <svg className="mt-[5px]" width="31" height="31" viewBox="0 0 31 31" fill="none" stroke="#252423" strokeWidth="1.500">
          <path d="M6 30H1V1h12l9 9v3M13 1v9h9" />
          <path d="M30 11l-9 14-4-3.500z" />
          <path d="M8 29.500c3 0 4-1 5-4s4-4 6.500-1.500c1.500 3-1 6-5 6.500z" />
        </svg>
      </div>
      <svg width="225" height="16" viewBox="0 0 225 16" fill="none" stroke="#8a8886" strokeWidth="1.200">
        <path d="M0 15.500h20l10-9.500 10 9.500h185" />
      </svg>
      <div className="mt-[14px] grid grid-cols-6 gap-x-3 gap-y-3 pl-[14px] pr-[13px]">
        {vizIcons.map((ic, i) => (
          <svg key={i} width="23" height="23" viewBox="0 0 23 23" className="overflow-visible">
            {ic}
          </svg>
        ))}
      </div>
      <div className="mt-[20px] flex h-[3px] gap-[6px] pl-4">
        <span className="h-[2px] w-[2px] bg-[#252423]" />
        <span className="h-[2px] w-[2px] bg-[#252423]" />
        <span className="h-[2px] w-[2px] bg-[#252423]" />
      </div>
      <div className="mt-[23px] border-t border-[#dddbd9] text-[14.900px]">
        <div className="pl-[15px] pt-[10px] text-[14.600px] leading-[20px]">Values</div>
        <div className="ml-[5px] mt-[7px] h-[35px] w-[213px] rounded-[2px] border border-dashed border-[#c0bebc] bg-white pl-[12px] text-[14.700px] leading-[33px]">Add data fields here</div>
        <div className="pl-[15px] pt-[14px] text-[14.400px] font-semibold leading-5 text-[#3b3a39]">Drill through</div>
        <div className="mt-[11px] flex h-[20px] items-center justify-between pl-[15px] pr-[27px] text-[14.600px]">
          <span>Cross-report</span>
          <span className="flex h-5 w-10 items-center rounded-full border border-[#605e5c] bg-white pl-[5px] text-[11px] text-[#605e5c]">
            <span className="mr-[2px] h-[10px] w-[10px] rounded-full bg-[#605e5c]" />
            Off
          </span>
        </div>
        <div className="mt-[14px] flex h-[20px] items-center justify-between pl-[15px] pr-[27px] text-[14.600px]">
          <span>Keep all filters</span>
          <span className="flex h-5 w-10 items-center rounded-full bg-[#117865] pl-[6px] text-[11px] text-white">
            On
            <span className="ml-[3px] h-[10px] w-[10px] rounded-full bg-white" />
          </span>
        </div>
        <div className="ml-[5px] mt-[13px] h-[32px] w-[213px] whitespace-nowrap rounded-[2px] border border-dashed border-[#c0bebc] bg-white pl-[10px] leading-[31px]">Add drill-through fields here</div>
      </div>
    </aside>
  );
}

function DataPane() {
  return (
    <aside className="flex flex-1 flex-col bg-[#f3f2f1] text-[#252423]">
      <div className="flex h-[50px] items-center justify-between pl-[11px] pr-[9px]">
        <h2 className="text-[19px] font-semibold">Data</h2>
        <DoubleChevron />
      </div>
      <div className="ml-[5px] mt-[7px] flex h-[30px] w-[215px] items-center rounded border border-b-[1.500px] border-[#d1cfcd] border-b-[#605e5c] bg-white pl-[15px]">
        <svg width="18" height="18" viewBox="0 0 18 18" fill="none" stroke="#605e5c" strokeWidth="1.300">
          <circle cx="7.500" cy="7.500" r="6.700" />
          <path d="M12.500 12.500l5 5" />
        </svg>
        <span className="ml-[9px] mt-[2px] text-[16.600px] text-[#6b6967]">Search</span>
      </div>
      <ul className="mt-[12px]">
        {["Details", "Orders"].map((t) => (
          <li key={t} className="flex h-[30px] items-center pl-5 text-[14.500px]">
            <svg width="8" height="14" viewBox="0 0 8 14" fill="none" stroke="#484644" strokeWidth="1.300">
              <path d="M0.500 0.500L7 7l-6.500 6.500" />
            </svg>
            <svg className="ml-2" width="16" height="16" viewBox="0 0 16 16" fill="none" stroke="#3b3a39" strokeWidth="1.300">
              <rect x="1" y="1" width="14" height="14" rx="2.500" />
              <path d="M5.500 1v14M10.500 1v14M1 5.500h14M1 10.500h14" />
            </svg>
            <span className="ml-[7px]">{t}</span>
          </li>
        ))}
      </ul>
    </aside>
  );
}

function StatusBar() {
  return (
    <div className="flex h-[29px] items-center border-t border-[#dddbd9] bg-[#f3f2f1] pl-[5px] pr-[22px] text-[15px] text-[#484644]">
      <span className="mt-[3px]">Page 2 of 2</span>
      <div className="ml-auto flex items-center">
        <span className="h-[2px] w-[6px] bg-[#605e5c]" />
        <svg className="ml-[6px]" width="125" height="14" viewBox="0 0 125 14">
          <path d="M0 7h125M62.500 3v8" stroke="#605e5c" strokeWidth="1.200" />
          <rect x="48" y="0" width="5" height="14" fill="#605e5c" />
        </svg>
        <svg className="ml-[7px]" width="10" height="10" viewBox="0 0 10 10">
          <path d="M5 0v10M0 5h10" stroke="#605e5c" strokeWidth="1.800" />
        </svg>
        <span className="ml-4 w-[36px] text-[14.600px] text-[#6b6967]">83%</span>
        <svg className="ml-4" width="21" height="16" viewBox="0 0 21 16" fill="none" stroke="#605e5c" strokeWidth="1.500">
          <rect x="1" y="1" width="19" height="14" />
          <path d="M4 6V4h3M14 4h3v2M17 10v2h-3M7 12H4v-2" strokeWidth="1.200" />
        </svg>
      </div>
    </div>
  );
}

/* ---------- taskbar ---------- */

function Chrome({ badge }: { badge: "photo" | "k" }) {
  return (
    <svg width="38" height="46" viewBox="0 0 38 46" className="overflow-visible">
      <circle cx="17" cy="23" r="15" fill="#fbbc04" />
      <path d="M17 23L4 15.500A15 15 0 0017 38l6.500-11.500z" fill="#34a853" />
      <path d="M4 15.500A15 15 0 0130 15.500H17l-6.500 11.200z" fill="#ea4335" />
      <circle cx="17" cy="23" r="7" fill="#fff" />
      <circle cx="17" cy="23" r="5.500" fill="#2f7df0" />
      {badge === "k" ? (
        <g>
          <circle cx="27" cy="12.500" r="10" fill="#ed6c02" />
          <text x="27" y="16.500" fontSize="11" fontFamily="Roboto" fill="#fff" textAnchor="middle" letterSpacing="0">K</text>
        </g>
      ) : (
        <g>
          <circle cx="27" cy="12.500" r="10" fill="#4b5f63" />
          <path d="M19 10l6-6 4 4-3 6zM28 16l7-3-3 7z" fill="#7f9a98" />
          <path d="M25 8h3v10h-3z" fill="#a5664f" />
        </g>
      )}
    </svg>
  );
}

function TaskIcon({ w, ml, dot, children }: { w: string; ml: string; dot?: boolean; children: React.ReactNode }) {
  return (
    <div className={`relative flex h-[59px] shrink-0 items-center justify-center ${w} ${ml}`}>
      {children}
      {dot && <span className="absolute bottom-[5px] h-[4px] w-[8px] rounded-full bg-[#9a9a9a]" />}
    </div>
  );
}

function Taskbar() {
  return (
    <footer className="flex h-[61px] items-center border-t-[1.500px] border-black bg-linear-to-r from-[#202020] via-[#1e222b] via-50% to-[#202020] text-white">
      <svg className="ml-[475px] mt-px" width="29" height="29" viewBox="0 0 29 29">
        <defs>
          <linearGradient id="win" x1="0" y1="0" x2="1" y2="1">
            <stop offset="0" stopColor="#7be9ff" />
            <stop offset="1" stopColor="#1a9bff" />
          </linearGradient>
        </defs>
        <path d="M0 1a1 1 0 011-1h13v14H0zM15 0h13a1 1 0 011 1v13H15zM0 15h14v14H1a1 1 0 01-1-1zM15 15h14v13a1 1 0 01-1 1H15z" fill="url(#win)" />
      </svg>
      <div className="ml-[17px] flex h-10 w-[275px] items-center rounded-full border border-[#56575b] bg-[#404145] pl-[14px]">
        <svg width="19" height="19" viewBox="0 0 19 19" fill="none" stroke="#f0f0f0" strokeWidth="2">
          <circle cx="8" cy="8" r="6.500" />
          <path d="M12.500 12.500l5.500 5.500" />
        </svg>
        <span className="ml-3 mt-px text-[16.800px] text-[#dcdcdc]">Search</span>
      </div>
      <TaskIcon w="w-[30px]" ml="ml-[15px]">
        <svg width="30" height="28" viewBox="0 0 30 28">
          <rect x="0" y="8" width="22" height="20" rx="2" fill="#5f6064" />
          <rect x="8" y="0" width="22" height="20" rx="2" fill="#f2f2f2" />
          <path d="M8 8h14v12H8z" fill="#b9b9ba" />
        </svg>
      </TaskIcon>
      <TaskIcon w="w-[28px]" ml="ml-[26px]"><Copilot size={29} id="tb" /></TaskIcon>
      <TaskIcon w="w-[30px]" ml="ml-[26px]">
        <svg width="30" height="30" viewBox="0 0 30 30">
          <defs>
            <linearGradient id="edge" x1="0" y1="0" x2="1" y2=".2">
              <stop offset="0" stopColor="#1a94dc" />
              <stop offset=".5" stopColor="#2cb9d6" />
              <stop offset="1" stopColor="#5edb5c" />
            </linearGradient>
          </defs>
          <circle cx="15" cy="15" r="15" fill="#0f5fb4" />
          <path d="M0 15C0 6 7 0 15 0s15 6 15 13c0 5-4 8-9 8-3 0-4-1-3-3 2-4-1-8-5-8C6 10 1 14 0 15z" fill="url(#edge)" />
          <path d="M11 13c-4 3-4 12 4 16-8 1-15-6-15-14 3-5 10-7 14-4z" fill="#1a84d8" />
          <path d="M18 18c-1 2 0 3 3 3 3 0 6-1 8-3-1 3-3 5-5 6-6 1-12-4-10-9 1-2 5-1 4 3z" fill="#20252d" />
        </svg>
      </TaskIcon>
      <TaskIcon w="w-[29px]" ml="ml-[25px]">
        <svg width="29" height="30" viewBox="0 0 29 30">
          <path d="M8 6V1.500h13V6" fill="none" stroke="#1fb0f0" strokeWidth="2" />
          <rect x="0" y="4" width="29" height="26" rx="3" fill="#f4f4f4" />
          <path d="M9 11.500h5v5H9z" fill="#f25022" />
          <path d="M15 11.500h5v5h-5z" fill="#7fba00" />
          <path d="M9 17.500h5v5H9z" fill="#00a4ef" />
          <path d="M15 17.500h5v5h-5z" fill="#ffb900" />
        </svg>
      </TaskIcon>
      <TaskIcon w="w-[27px]" ml="ml-[28px]">
        <svg width="27" height="29" viewBox="0 0 27 29">
          <path d="M13.500 0L26 7v14l-12.500 8L1 21V7z" fill="#4b4f55" />
          <path d="M13.500 0L1 7v14l5-2.500z" fill="#989ca2" />
          <path d="M14.500 4.500l6 11.500L7 21z" fill="#24262b" stroke="#9da1a7" strokeWidth="1.500" />
          <path d="M1 21l12.500 8L26 21l-13 1z" fill="#6a6e74" />
        </svg>
      </TaskIcon>
      <TaskIcon w="w-[30px]" ml="ml-[26px]">
        <svg width="30" height="30" viewBox="0 0 30 30">
          <rect width="30" height="30" fill="#0a6cf0" />
          <path d="M4 22l5-14h2.500l-5 14zM9.500 22l5-14H17l-5 14zM15 22l4.500-14H22v10h-2.500v-4L17.500 22zM21 19.500h2.500V22H21z" fill="#fff" />
        </svg>
      </TaskIcon>
      <TaskIcon w="w-[30px]" ml="ml-[25px]">
        <svg width="30" height="28" viewBox="0 0 30 28">
          <path d="M6 8L18 0l12 8v16a3 3 0 01-3 3H9z" fill="#1574c8" />
          <path d="M30 9v14a4 4 0 01-4 4H12l8-9z" fill="#35c3f3" />
          <path d="M8 8l10-6 12 8-12 9z" fill="#0b4ca5" />
          <rect x="0" y="6" width="16" height="16" rx="1.500" fill="#0f6fd0" />
          <ellipse cx="8" cy="14" rx="3.500" ry="4" fill="none" stroke="#fff" strokeWidth="2.200" />
        </svg>
      </TaskIcon>
      <TaskIcon w="w-[29px]" ml="ml-[26px]">
        <svg width="29" height="27" viewBox="0 0 29 27">
          <rect x="1" y="0" width="26" height="20" rx="1.500" fill="#1577bd" />
          <rect x="0" y="19" width="29" height="2" fill="#0d4f86" />
          <rect x="5" y="4" width="13" height="17" rx="1" fill="#38bdf5" />
          <rect x="9" y="5" width="5" height="1.500" fill="#0d4f86" />
          <rect x="5" y="14" width="13" height="7" fill="#2798e0" />
          <rect x="5" y="21" width="13" height="6" fill="#0d5ea6" />
        </svg>
      </TaskIcon>
      <TaskIcon w="w-[38px]" ml="ml-[23px]" dot><Chrome badge="photo" /></TaskIcon>
      <TaskIcon w="w-[38px]" ml="ml-[17px]" dot><Chrome badge="k" /></TaskIcon>
      <TaskIcon w="w-[30px]" ml="ml-[19px]" dot>
        <svg width="30" height="26" viewBox="0 0 30 26">
          <path d="M0 2a2 2 0 012-2h9l3 4h14a2 2 0 012 2v6H0z" fill="#e0a010" />
          <rect x="0" y="5" width="30" height="21" rx="1.500" fill="#ffcd45" />
          <path d="M5 21a2.500 2.500 0 012.500-2.500h15A2.500 2.500 0 0125 21v5H5z" fill="#1273c6" />
          <path d="M9 22h12" stroke="#0b4c8a" strokeWidth="1.500" />
        </svg>
      </TaskIcon>
      <div className="relative ml-[15px] flex h-[50px] w-[49px] items-center justify-center rounded-md border border-[#393939] bg-[#2d2d2e]">
        <svg width="24" height="30" viewBox="0 0 24 30">
          <rect x="13" y="0" width="11" height="30" rx="1" fill="#d9920c" />
          <rect x="7" y="7" width="11" height="23" rx="1" fill="#efbb1f" />
          <rect x="0" y="15" width="11" height="15" rx="1" fill="#f8dd63" />
        </svg>
        <span className="absolute bottom-0 h-[4px] w-[20px] rounded-full bg-[#d89be8]" />
      </div>
      <div className="ml-auto flex items-center pr-[26px]">
        <Chevron className="rotate-180" w={14} sw={1.500} />
        <div className="ml-[28px] w-[28px] text-center text-[14.200px] leading-5">
          ENG
          <br />
          IN
        </div>
        <svg className="ml-[23px]" width="20" height="16" viewBox="0 0 20 16" fill="none" stroke="#fff" strokeWidth="1.500">
          <path d="M1 6c5-6 13-6 18 0M4 9c3.500-4 8.500-4 12 0M7 12c2-2.300 4-2.300 6 0" />
          <circle cx="10" cy="14" r="1.200" fill="#fff" stroke="none" />
        </svg>
        <svg className="ml-[10px]" width="20" height="16" viewBox="0 0 20 16" fill="none" stroke="#fff" strokeWidth="1.400">
          <path d="M1 5.500h3L9 1v14l-5-4.500H1zM11.500 5c1.500 2 1.500 4 0 6M14 3c2.500 3 2.500 7 0 10M16.500 1c3.500 4 3.500 10 0 14" />
        </svg>
        <svg className="ml-[10px]" width="20" height="13" viewBox="0 0 20 13" fill="none" stroke="#fff" strokeWidth="1.500">
          <rect x="1" y="1" width="15.500" height="11" rx="2.500" />
          <path d="M18.500 4.500v4" strokeWidth="2" />
          <rect x="3" y="3" width="4" height="7" fill="#fff" stroke="none" />
        </svg>
        <div className="mb-[2px] ml-[20px] w-[78px] text-right text-[15.500px] leading-5">
          21:56
          <br />
          <span className="whitespace-nowrap">13-09-2025</span>
        </div>
        <svg className="ml-[11px]" width="17" height="19" viewBox="0 0 17 19" fill="none" stroke="#fff" strokeWidth="1.400">
          <path d="M8 1C4 1 3 4 3 7v5l-2 3h13l-1.500-3v-1M5.500 15.500c.5 3 4 3 4.500 0" />
          <path d="M10.500 1.500H16L11 7h5.500M6.500 6.500h3.500l-3.500 4H10" strokeWidth="1.300" />
        </svg>
      </div>
    </footer>
  );
}

export default function App() {
  return (
    <div className="flex h-[1080px] w-[1920px] flex-col overflow-hidden bg-[#f3f2f1] font-['Open_Sans',sans-serif] tracking-[-0.020em]">
      <TitleBar />
      <Ribbon />
      <div className="flex h-[790px]">
        <LeftRail />
        <div className="flex w-[1417px] shrink-0 flex-col">
          <div className="flex h-[746px] bg-white">
            <div className="w-[1376px] overflow-hidden">
              <ReportPage />
            </div>
            <div className="flex flex-1 flex-col items-center border-l border-[#a19f9d] pt-[15px]">
              <DoubleChevron flip />
              <svg className="ml-[8px] mt-[18px]" width="15" height="17" viewBox="0 0 15 17" fill="none" stroke="#252423" strokeWidth="1.500">
                <path d="M14 1v15L8 10.500H1v-4h7z" strokeLinejoin="round" />
              </svg>
              <span className="mt-[10px] text-[18px] font-semibold leading-[20px] tracking-normal text-[#252423] [writing-mode:vertical-rl]">Filters</span>
            </div>
          </div>
          <PageTabs />
        </div>
        <div className="w-px shrink-0 bg-[#dddbd9]" />
        <VizPane />
        <DataPane />
      </div>
      <StatusBar />
      <Taskbar />
    </div>
  );
}
